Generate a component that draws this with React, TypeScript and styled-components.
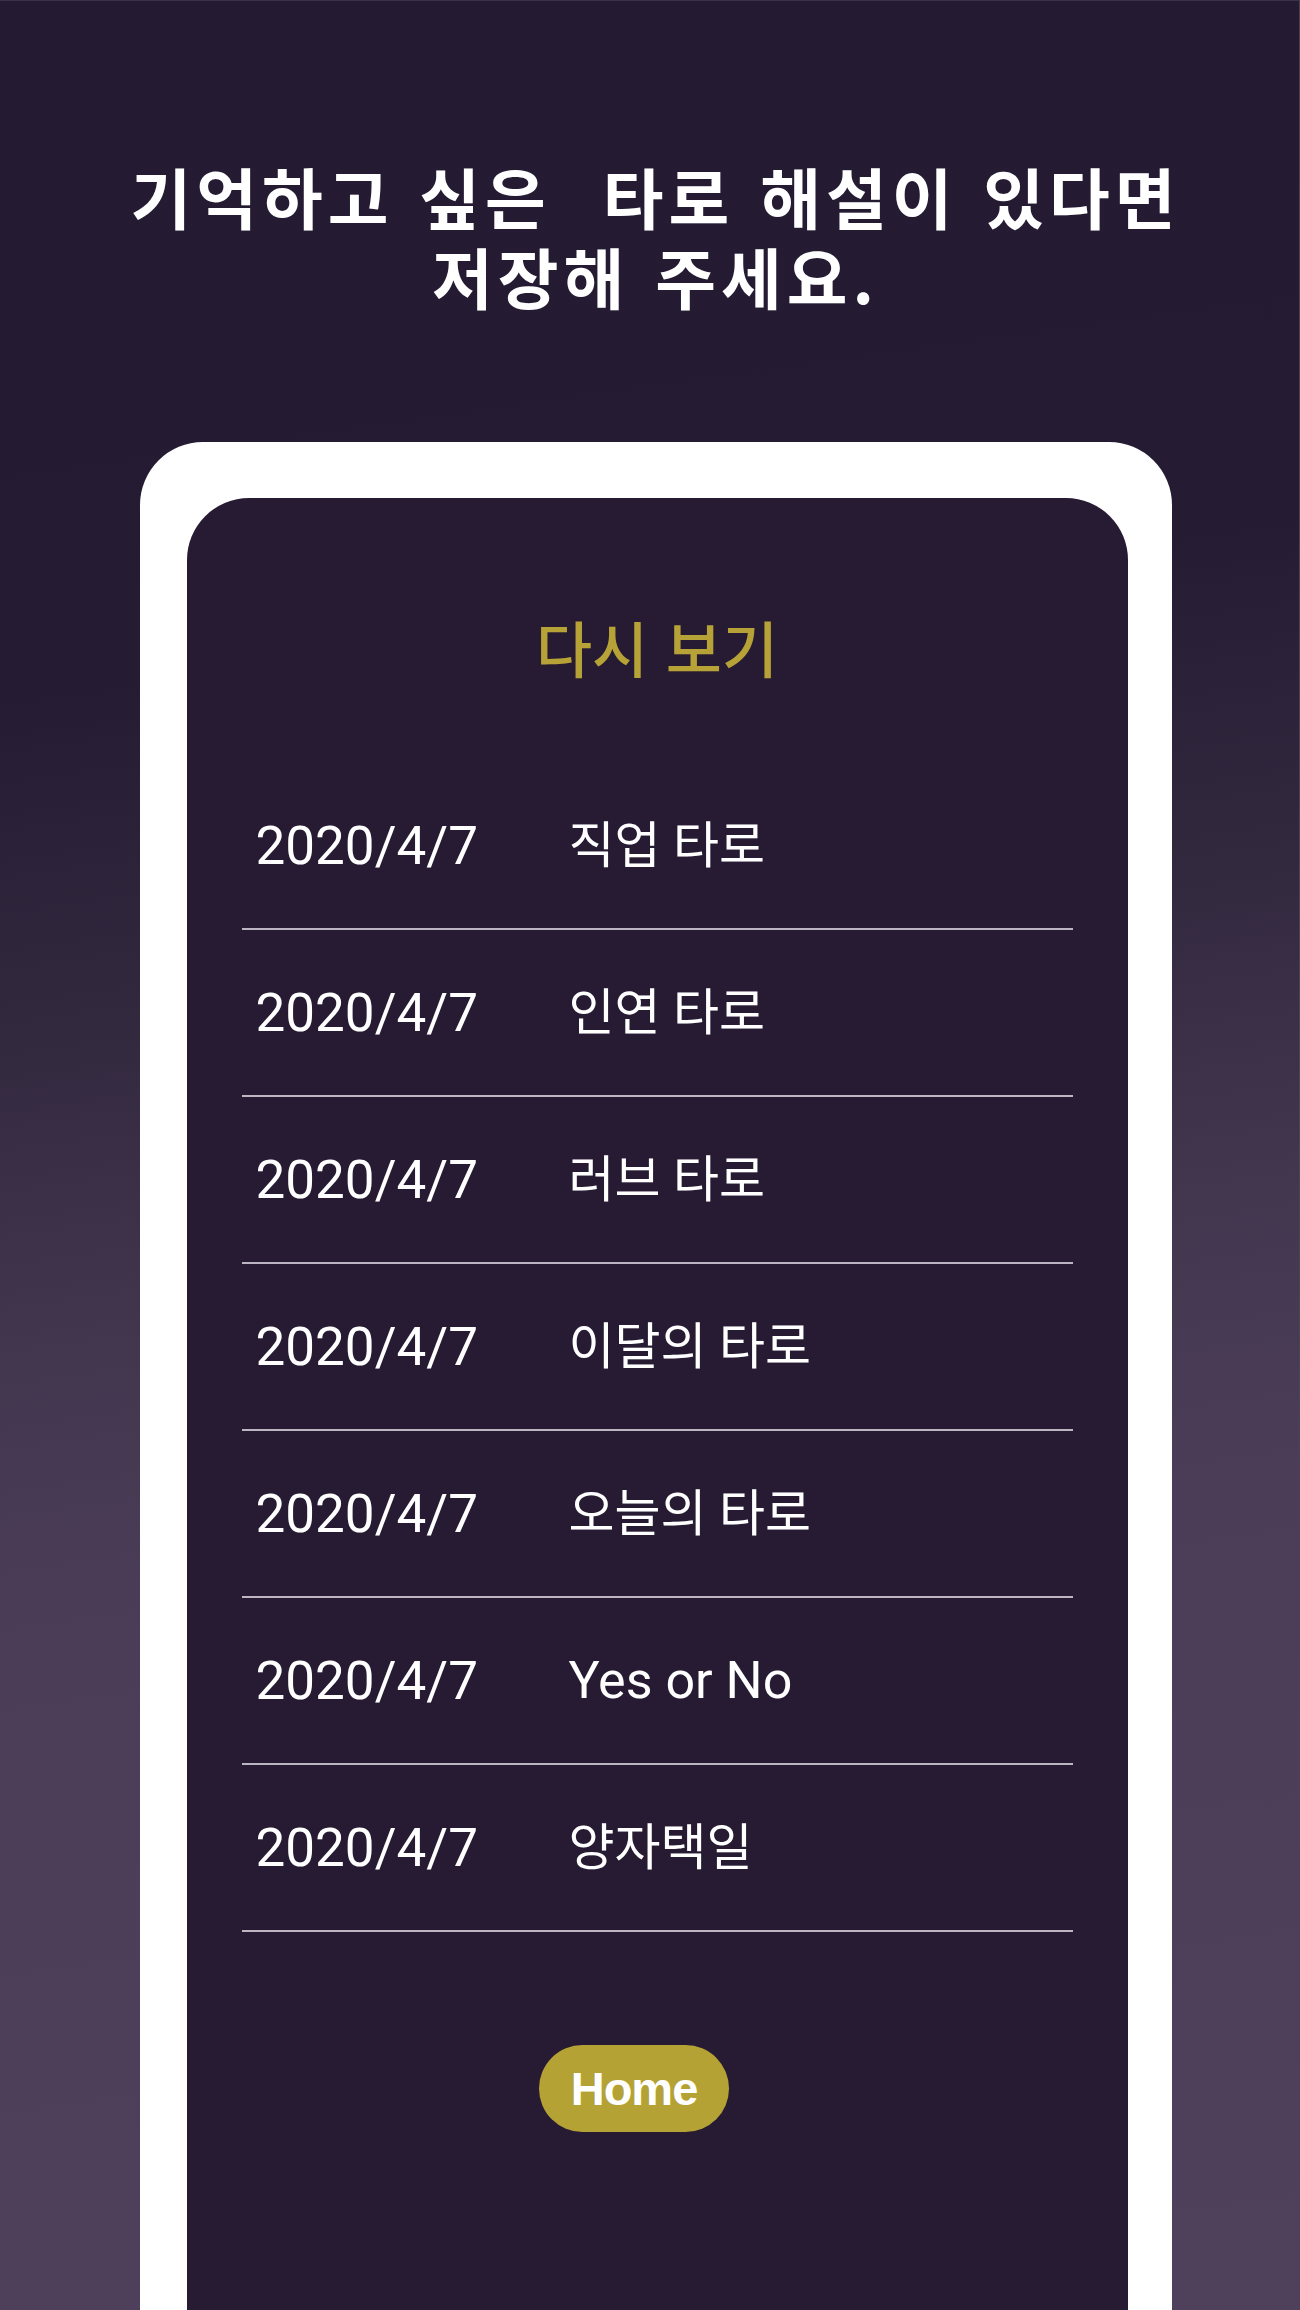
import React from "react";
import styled, { createGlobalStyle } from "styled-components";

const GlobalStyle = createGlobalStyle`
  html, body {
    margin: 0;
    padding: 0;
    background: #241c32;
  }
  * { box-sizing: border-box; }
`;

const Page = styled.div`
  width: 1300px;
  height: 2310px;
  overflow: hidden;
  padding: 154px 0 0 12px;
  display: flex;
  flex-direction: column;
  align-items: center;
  background: linear-gradient(
    172deg,
    #241b32 0%,
    #251c33 28%,
    #33293f 42%,
    #433750 55%,
    #4b3d57 66%,
    #4f415c 100%
  );
  border-top: 1px solid #3a3247;
  border-right: 1px solid #4a4257;
`;

const Title = styled.h1`
  margin: 0;
  font-family: "Noto Sans CJK KR", "Noto Sans", sans-serif;
  font-weight: 700;
  font-size: 66px;
  line-height: 80px;
  letter-spacing: 5px;
  word-spacing: 6px;
  color: #ffffff;
  text-align: center;
  white-space: pre;
`;

const Frame = styled.div`
  margin-top: 127px;
  width: 1032px;
  flex: 1;
  background: #ffffff;
  border-radius: 63px 63px 0 0;
  padding: 56px 44px 0 47px;
  display: flex;
  flex-direction: column;
`;

const Card = styled.div`
  flex: 1;
  background: #261b33;
  border-radius: 62px 62px 0 0;
  padding: 0 55px;
  display: flex;
  flex-direction: column;
`;

const Heading = styled.h2`
  margin: 99px 0 66px;
  font-family: "Noto Sans CJK KR", sans-serif;
  font-weight: 500;
  font-size: 61px;
  line-height: 100px;
  letter-spacing: 0;
  word-spacing: 4px;
  color: #b6a236;
  text-align: center;
`;

const List = styled.div`
  display: flex;
  flex-direction: column;
`;

const Row = styled.div`
  height: 167px;
  display: grid;
  grid-template-columns: 313px 1fr;
  align-items: center;
  padding-left: 14px;
  border-bottom: 2px solid rgba(214, 209, 219, 0.85);
  color: #ffffff;
`;

const DateText = styled.span`
  font-family: "Roboto", sans-serif;
  font-size: 53px;
  font-weight: 400;
  line-height: 60px;
`;

const Category = styled.span<{ $hangul: boolean }>`
  font-family: "Roboto", "Noto Sans CJK KR", sans-serif;
  font-size: ${(p) => (p.$hangul ? "50px" : "52px")};
  letter-spacing: 0;
  font-weight: 400;
  line-height: 60px;
`;

const HomeButton = styled.button`
  align-self: center;
  margin: 113px 46px 0 0;
  width: 190px;
  height: 87px;
  border: none;
  border-radius: 44px;
  background: #b5a235;
  color: #ffffff;
  font-family: "Liberation Sans", Arial, sans-serif;
  font-weight: 700;
  font-size: 47px;
  letter-spacing: -1px;
  line-height: 1;
  padding: 0;
  cursor: pointer;
`;

const entries: { date: string; name: string }[] = [
  { date: "2020/4/7", name: "직업 타로" },
  { date: "2020/4/7", name: "인연 타로" },
  { date: "2020/4/7", name: "러브 타로" },
  { date: "2020/4/7", name: "이달의 타로" },
  { date: "2020/4/7", name: "오늘의 타로" },
  { date: "2020/4/7", name: "Yes or No" },
  { date: "2020/4/7", name: "양자택일" },
];

export default function App() {
  return (
    <>
      <GlobalStyle />
      <Page>
        <Title>{"기억하고 싶은  타로 해설이 있다면\n저장해 주세요."}</Title>
        <Frame>
          <Card>
            <Heading>다시 보기</Heading>
            <List>
              {entries.map((e, i) => (
                <Row key={i}>
                  <DateText>{e.date}</DateText>
                  <Category $hangul={/[가-힣]/.test(e.name)}>{e.name}</Category>
                </Row>
              ))}
            </List>
            <HomeButton>Home</HomeButton>
          </Card>
        </Frame>
      </Page>
    </>
  );
}
